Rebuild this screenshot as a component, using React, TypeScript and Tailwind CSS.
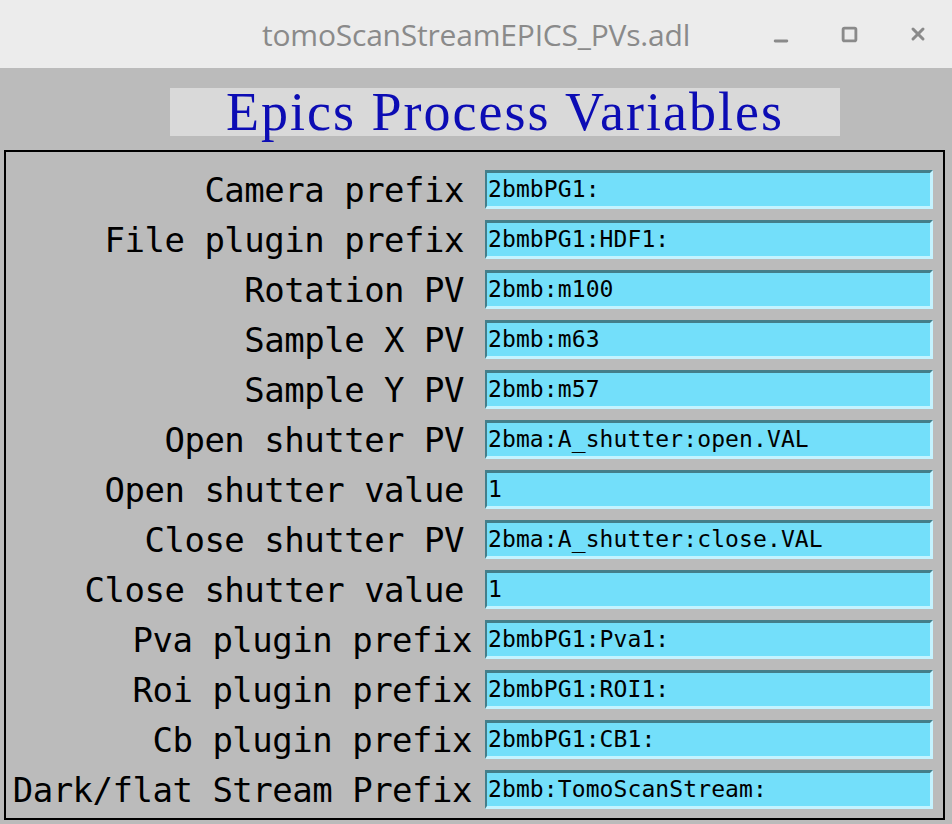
import { Minus, Square, X } from "lucide-react";

const ROWS = [
  { label: "Camera prefix", value: "2bmbPG1:", wide: false },
  { label: "File plugin prefix", value: "2bmbPG1:HDF1:", wide: false },
  { label: "Rotation PV", value: "2bmb:m100", wide: false },
  { label: "Sample X PV", value: "2bmb:m63", wide: false },
  { label: "Sample Y PV", value: "2bmb:m57", wide: false },
  { label: "Open shutter PV", value: "2bma:A_shutter:open.VAL", wide: false },
  { label: "Open shutter value", value: "1", wide: false },
  { label: "Close shutter PV", value: "2bma:A_shutter:close.VAL", wide: false },
  { label: "Close shutter value", value: "1", wide: false },
  { label: "Pva plugin prefix", value: "2bmbPG1:Pva1:", wide: true },
  { label: "Roi plugin prefix", value: "2bmbPG1:ROI1:", wide: true },
  { label: "Cb plugin prefix", value: "2bmbPG1:CB1:", wide: true },
  { label: "Dark/flat Stream Prefix", value: "2bmb:TomoScanStream:", wide: true },
];

function TextEntry({ value }: { value: string }) {
  return (
    <div className="flex h-[39px] w-[448px] items-center border-t-[3px] border-l-[2px] border-r-[3px] border-b-[3px] border-t-[#447e8a] border-l-[#447e8a] border-r-[#c4f3ff] border-b-[#c4f3ff] bg-[#73dffa] pl-[1px]">
      <span className="whitespace-pre font-['DejaVu_Sans_Mono',monospace] text-[23px] leading-none tracking-[0.1px] text-black">
        {value}
      </span>
    </div>
  );
}

export default function App() {
  return (
    <div className="flex h-[824px] w-[952px] flex-col overflow-hidden bg-[#bbbbbb]">
      {/* window title bar */}
      <div className="relative flex h-[68px] shrink-0 items-center justify-center bg-[#ececec]">
        <span className="font-['Open_Sans',sans-serif] text-[30px] tracking-[-0.2px] text-[#8a8a8a]">
          tomoScanStreamEPICS_PVs.adl
        </span>
        <div className="absolute right-[24px] top-0 flex h-full items-center gap-[50px] text-[#8a8a8a]">
          <Minus className="mt-[14px] h-[20px] w-[20px]" strokeWidth={3.4} />
          <Square className="h-[17px] w-[17px]" strokeWidth={4} />
          <X className="h-[20px] w-[20px]" strokeWidth={3.6} />
        </div>
      </div>

      {/* display title */}
      <div className="ml-[170px] mt-[20px] flex h-[48px] w-[670px] items-center justify-center bg-[#d9d9d9]">
        <span className="font-['Liberation_Serif',serif] text-[54px] leading-none tracking-[2px] text-[#0c0cb4]">
          Epics Process Variables
        </span>
      </div>

      {/* PV panel */}
      <div className="ml-[4px] mt-[14px] flex h-[670px] w-[941px] flex-col gap-[11px] border-2 border-black pt-[18px]">
        {ROWS.map((r) => (
          <div key={r.label} className="flex h-[39px] items-center">
            <div
              className={
                r.wide
                  ? "flex w-[479px] justify-end pr-[13px]"
                  : "flex w-[479px] justify-end pr-[21px]"
              }
            >
              <span className="whitespace-pre font-['DejaVu_Sans_Mono',monospace] text-[34px] leading-none tracking-[-0.5px] text-black">
                {r.label}
              </span>
            </div>
            <TextEntry value={r.value} />
          </div>
        ))}
      </div>
    </div>
  );
}
